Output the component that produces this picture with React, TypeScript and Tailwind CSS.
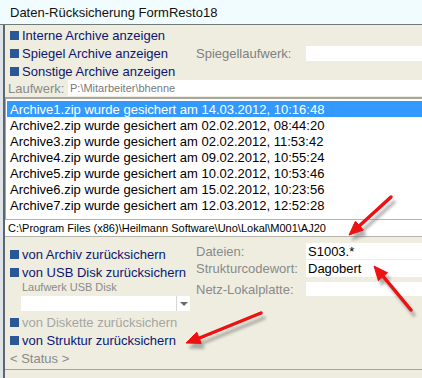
import React from 'react';

const archives = [
  'Archive1.zip wurde gesichert am 14.03.2012, 10:16:48',
  'Archive2.zip wurde gesichert am 02.02.2012, 08:44:20',
  'Archive3.zip wurde gesichert am 02.02.2012, 11:53:42',
  'Archive4.zip wurde gesichert am 09.02.2012, 10:55:24',
  'Archive5.zip wurde gesichert am 10.02.2012, 10:53:46',
  'Archive6.zip wurde gesichert am 15.02.2012, 10:23:56',
  'Archive7.zip wurde gesichert am 12.03.2012, 12:52:28',
];

function Box() {
  return <span className="w-[9px] h-[9px] bg-[#2a5796] mr-[3px] shrink-0" />;
}

function Option({ label, disabled }: { label: string; disabled?: boolean }) {
  return (
    <div className="flex items-center h-[18px] pl-[5px]">
      <Box />
      <span className={disabled ? 'text-[#a5a5a5]' : 'text-[#0c1670]'}>{label}</span>
    </div>
  );
}

function Arrows() {
  return (
    <svg className="absolute inset-0 pointer-events-none" width="422" height="378">
      <defs>
        <filter id="sh" x="-20%" y="-20%" width="140%" height="140%">
          <feGaussianBlur stdDeviation="1.6" />
        </filter>
      </defs>
      <g transform="translate(3 5)" filter="url(#sh)" fill="#7d7d7d" stroke="#7d7d7d" opacity="0.6">
        <line x1="391" y1="197" x2="357" y2="228" strokeWidth="3.5" strokeLinecap="round" />
        <polygon points="349,235 363.4,230 355.4,221.2" />
        <line x1="411" y1="310" x2="382" y2="275" strokeWidth="3.5" strokeLinecap="round" />
        <polygon points="374,266 387.6,272.8 378.4,280.6" />
        <line x1="261" y1="313" x2="197" y2="339" strokeWidth="3.5" strokeLinecap="round" />
        <polygon points="186,343 201.2,343.4 196.8,332.2" />
      </g>
      <g fill="#ee1111" stroke="#ee1111">
        <line x1="391" y1="197" x2="357" y2="228" strokeWidth="3.5" strokeLinecap="round" />
        <polygon points="349,235 363.4,230 355.4,221.2" />
        <line x1="411" y1="310" x2="382" y2="275" strokeWidth="3.5" strokeLinecap="round" />
        <polygon points="374,266 387.6,272.8 378.4,280.6" />
        <line x1="261" y1="313" x2="197" y2="339" strokeWidth="3.5" strokeLinecap="round" />
        <polygon points="186,343 201.2,343.4 196.8,332.2" />
      </g>
    </svg>
  );
}

export default function App() {
  return (
    <div className="relative w-[422px] h-[378px] overflow-hidden bg-[#eeede0] text-[13px] leading-none font-['Liberation_Sans',Arial,sans-serif]">
      {/* Title */}
      <div className="h-[25px] bg-[#f0fcff] border-b border-[#6f7b76] flex items-center pl-[10px] text-[#111]">
        Daten-Rücksicherung FormResto18
      </div>

      <div className="flex h-[353px]">
        <div className="w-[5px] bg-[#dfe4e9] border-r-2 border-[#5c6670] shrink-0" />

        <div className="flex-1 flex flex-col">
          {/* Anzeige options */}
          <div className="pt-[1px]">
            <Option label="Interne Archive anzeigen" />
            <div className="flex items-center h-[18px]">
              <div className="w-[191px]">
                <Option label="Spiegel Archive anzeigen" />
              </div>
              <span className="w-[110px] text-[#7f7f7f]">Spiegellaufwerk:</span>
              <div className="flex-1 h-[15px] bg-white" />
            </div>
            <Option label="Sonstige Archive anzeigen" />
            <div className="flex items-center h-[16px]">
              <span className="w-[63px] pl-[3px] text-[#8a8a8a]">Laufwerk:</span>
              <div className="flex-1 h-full bg-white flex items-center pl-[2px] text-[11px] text-[#7a7a7a]">
                P:\Mitarbeiter\bhenne
              </div>
            </div>
          </div>

          {/* Archive list */}
          <div className="mt-[1px] h-[122px] bg-white border-t-2 border-l border-[#a7a7a0] pt-[2px] pl-[1px]">
            {archives.map((a, i) => (
              <div
                key={a}
                className={`h-[16px] flex items-center pl-[3px] ${i === 0 ? 'bg-[#3399ff] text-white' : 'text-black'}`}
              >
                {a}
              </div>
            ))}
          </div>

          {/* Path */}
          <div className="h-[18px] bg-white border-t border-b border-[#b5b5aa] flex items-center pl-[3px] text-[11px] text-black">
            C:\Program Files (x86)\Heilmann Software\Uno\Lokal\M001\AJ20
          </div>

          {/* Restore options */}
          <div className="flex">
            <div className="w-[191px] pt-[8px]">
              <Option label="von Archiv zurücksichern" />
              <Option label="von USB Disk zurücksichern" />
              <div className="h-[13px] flex items-center pl-[17px] text-[11px] text-[#8a8a8a]">Laufwerk USB Disk</div>
              <div className="ml-[16px] mt-[2px] h-[15px] w-[169px] bg-white flex justify-end items-center">
                <div className="w-[14px] h-full border-l border-[#d6d6d6] flex items-center justify-center">
                  <span className="w-0 h-0 border-l-[4px] border-r-[4px] border-t-[4px] border-l-transparent border-r-transparent border-t-[#6a6a6a]" />
                </div>
              </div>
              <div className="mt-[2px]">
                <Option label="von Diskette zurücksichern" disabled />
                <Option label="von Struktur zurücksichern" />
              </div>
              <div className="h-[19px] flex items-center pl-[5px] text-[#8a8a8a]">&lt; Status &gt;</div>
            </div>

            <div className="flex-1 pt-[6px]">
              <div className="flex items-center h-[16px]">
                <span className="w-[110px] text-[#8a8a8a]">Dateien:</span>
                <div className="flex-1 h-full bg-white flex items-center pl-[2px] text-black">S1003.*</div>
              </div>
              <div className="flex items-center h-[17px] mt-[1px]">
                <span className="w-[110px] text-[#8a8a8a]">Strukturcodewort:</span>
                <div className="flex-1 h-full bg-white flex items-center pl-[2px] text-black">Dagobert</div>
              </div>
              <div className="flex items-center h-[14px] mt-[5px]">
                <span className="w-[110px] text-[#8a8a8a]">Netz-Lokalplatte:</span>
                <div className="flex-1 h-full bg-white" />
              </div>
            </div>
          </div>

          <div className="border-t border-[#a3a39a] mt-[1px] flex-1" />
        </div>
      </div>

      <Arrows />
    </div>
  );
}
